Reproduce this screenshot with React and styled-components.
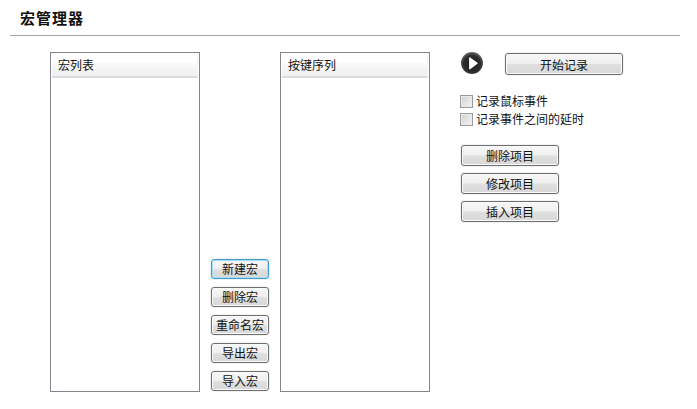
import React from 'react';
import styled, { createGlobalStyle } from 'styled-components';

const GlobalStyle = createGlobalStyle`
  html, body {
    margin: 0;
    padding: 0;
    background: #fff;
    font-family: "Liberation Sans", "Noto Sans CJK SC", sans-serif;
    font-size: 12px;
    color: #111;
  }
`;

const Page = styled.div`
  width: 697px;
  height: 409px;
  overflow: hidden;
`;

const Header = styled.div`
  width: 660px;
  height: 35px;
  margin-left: 10px;
  padding-left: 10px;
  border-bottom: 1px solid #a5a5a0;
`;

const Title = styled.h1`
  margin: 0;
  padding-top: 11px;
  font-size: 15px;
  line-height: 16px;
  letter-spacing: 1px;
  font-weight: bold;
  color: #111;
`;

const Content = styled.div`
  display: flex;
  align-items: flex-start;
  padding: 16px 0 0 50px;
`;

const ListBox = styled.div`
  width: 150px;
  height: 340px;
  box-sizing: border-box;
  border: 1px solid #85858d;
  padding: 1px;
  background: #fff;
`;

const ListHead = styled.div`
  height: 24px;
  box-sizing: border-box;
  padding: 5px 0 0 6px;
  line-height: 14px;
  font-size: 12px;
  border-right: 1px solid #f2f2f2;
  border-bottom: 2px solid #dcdce0;
  background: linear-gradient(#ffffff 0 36%, #f9f9fa 44%, #f0f0f1 100%);
`;

const MiddleColumn = styled.div`
  width: 80px;
  height: 340px;
  box-sizing: border-box;
  padding-bottom: 1px;
  display: flex;
  flex-direction: column;
  justify-content: flex-end;
  align-items: center;
  gap: 8px;
`;

const Button = styled.button`
  display: block;
  width: ${(props) => props.$width}px;
  height: ${(props) => props.$height || 20}px;
  padding: ${(props) => props.$textDrop || 2}px 0 0;
  box-sizing: border-box;
  border: 1px solid ${(props) => (props.$active ? '#3f9fd0' : '#6f6f72')};
  border-radius: 3px;
  background: linear-gradient(#f7f7f7 0, #efefef 48%, #dfdfdf 52%, #d8d8d8 100%);
  box-shadow: ${(props) => (props.$active
    ? 'inset 0 0 0 1px #a8def5, 0 0 0 1px #f0f0f0'
    : 'inset 0 0 0 1px #fafafa, 0 0 0 1px #f2f2f2')};
  font-family: inherit;
  font-size: 12px;
  line-height: 16px;
  color: #111;
`;

const SidePanel = styled.div`
  margin-left: 31px;
  display: flex;
  flex-direction: column;
  align-items: flex-start;
`;

const RecordRow = styled.div`
  display: flex;
  align-items: center;
  gap: 22px;
  height: 24px;
  margin-bottom: 17px;
`;

const PlaySvg = styled.svg`
  align-self: flex-start;
`;

const CheckRow = styled.label`
  display: flex;
  align-items: center;
  gap: 3px;
  height: 18px;
  margin-left: -1px;
  line-height: 18px;
  font-size: 12px;
`;

const CheckBox = styled.span`
  width: 13px;
  height: 13px;
  margin-top: -2px;
  box-sizing: border-box;
  border: 1px solid #9a9a9e;
  background: linear-gradient(135deg, #cfcfcf, #f6f6f6);
  box-shadow: inset 0 0 0 1px #ececec;
`;

const ItemButtons = styled.div`
  display: flex;
  flex-direction: column;
  gap: 7px;
  margin-top: 16px;
`;

const PlayIcon = () => (
  <PlaySvg width="22" height="22" viewBox="0 0 22 22">
    <defs>
      <radialGradient id="disc" cx="0.5" cy="0.55" r="0.55">
        <stop offset="0" stopColor="#1e1e1e" />
        <stop offset="0.72" stopColor="#2e2e2e" />
        <stop offset="1" stopColor="#6a6a6a" />
      </radialGradient>
    </defs>
    <circle cx="11" cy="11" r="11" fill="url(#disc)" />
    <path d="M8.8 6 L16 11.3 L8.8 16.6 Z" fill="#fff" stroke="#fff" strokeWidth="1.4" strokeLinejoin="round" />
  </PlaySvg>
);

const macroButtons = ['新建宏', '删除宏', '重命名宏', '导出宏', '导入宏'];
const itemButtons = ['删除项目', '修改项目', '插入项目'];

export default function App() {
  return (
    <Page>
      <GlobalStyle />
      <Header>
        <Title>宏管理器</Title>
      </Header>
      <Content>
        <ListBox>
          <ListHead>宏列表</ListHead>
        </ListBox>
        <MiddleColumn>
          {macroButtons.map((label, i) => (
            <Button key={label} $width={58} $active={i === 0}>{label}</Button>
          ))}
        </MiddleColumn>
        <ListBox>
          <ListHead>按键序列</ListHead>
        </ListBox>
        <SidePanel>
          <RecordRow>
            <PlayIcon />
            <Button $width={118} $height={22} $textDrop={4}>开始记录</Button>
          </RecordRow>
          <CheckRow><CheckBox />记录鼠标事件</CheckRow>
          <CheckRow><CheckBox />记录事件之间的延时</CheckRow>
          <ItemButtons>
            {itemButtons.map((label) => (
              <Button key={label} $width={98} $height={21} $textDrop={3}>{label}</Button>
            ))}
          </ItemButtons>
        </SidePanel>
      </Content>
    </Page>
  );
}
